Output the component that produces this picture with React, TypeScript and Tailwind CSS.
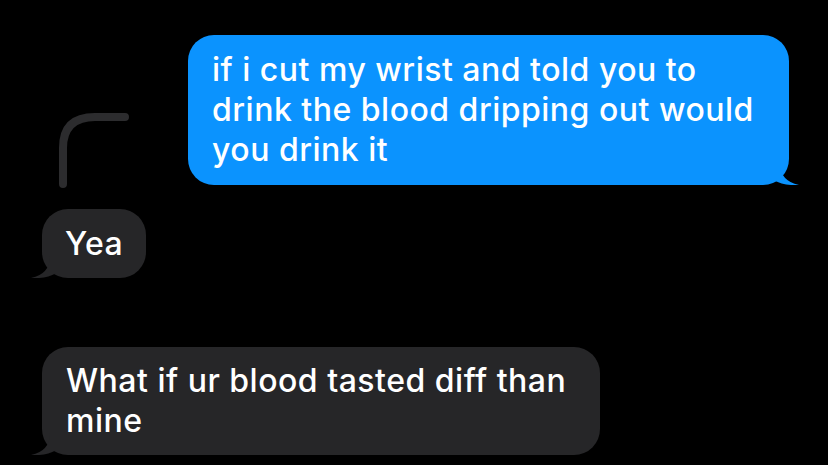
const font = { fontFamily: 'Inter, "Noto Sans", sans-serif' };

const Tail = ({ side, color }: { side: 'left' | 'right'; color: string }) => (
	<svg
		width="26"
		height="22"
		viewBox="0 0 26 22"
		className={side === 'right' ? 'absolute -right-[11px] bottom-0' : 'absolute -left-[12px] bottom-0'}
	>
		{side === 'right' ? (
			<path d="M0 0 L6 0 Q6 18 25 22 Q8 23 -2 16 Z" fill={color} />
		) : (
			<path d="M26 0 L20 0 Q20 18 1 22 Q18 23 28 16 Z" fill={color} />
		)}
	</svg>
);

const App = () => {
	return (
		<div className="w-[828px] h-[465px] bg-black overflow-hidden relative text-white" style={font}>
			{/* reply thread line */}
			<svg className="absolute left-[55px] top-[108px]" width="80" height="84" viewBox="0 0 80 84">
				<path d="M8 76 L8 40 Q8 9 40 9 L70 9" stroke="#2c2c2e" strokeWidth="8" fill="none" strokeLinecap="round" />
			</svg>

			<div className="flex flex-col pt-[35px]">
				{/* sent */}
				<div className="self-end mr-[39px] relative">
					<div className="w-[601px] bg-[#0b93fe] rounded-[26px] pl-[24px] pr-4 py-[15px] text-[32px] font-medium leading-[40px] tracking-[0.5px]">
						if i cut my wrist and told you to
						<br />
						drink the blood dripping out would
						<br />
						you drink it
					</div>
					<Tail side="right" color="#0b93fe" />
				</div>

				{/* received */}
				<div className="ml-[42px] mt-[24px] relative self-start">
					<div className="bg-[#262628] rounded-[26px] px-[23px] py-[14px] text-[32px] font-medium leading-[41px] tracking-[0.5px]">
						Yea
					</div>
					<Tail side="left" color="#262628" />
				</div>

				<div className="ml-[42px] mt-[69px] relative self-start">
					<div className="w-[558px] bg-[#262628] rounded-[26px] px-[24px] py-[14px] text-[32px] font-medium leading-[40px] tracking-[0.5px]">
						What if ur blood tasted diff than
						<br />
						mine
					</div>
					<Tail side="left" color="#262628" />
				</div>
			</div>
		</div>
	);
};

export default App;
